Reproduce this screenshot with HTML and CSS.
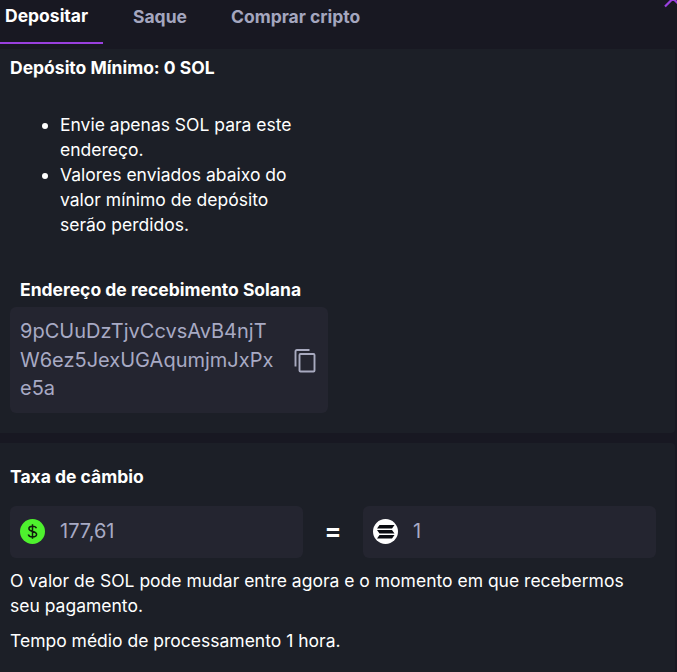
FILE: index.html
```html
<!DOCTYPE html>
<html lang="pt-BR">
<head>
<meta charset="utf-8">
<title>Depositar</title>
<link rel="stylesheet" href="styles.css">
</head>
<body>
<nav class="tabs">
  <span class="tab active">Depositar</span>
  <span class="tab saque">Saque</span>
  <span class="tab comprar">Comprar cripto</span>
</nav>
<svg class="chevron" width="13" height="8" viewBox="0 0 13 8"><path d="M1 6.500L9 -1.500L17 6.500" fill="none" stroke="#9a40df" stroke-width="2.200"/></svg>
<section class="panel deposit">
  <h2 class="minimum">Depósito Mínimo: 0 SOL</h2>
  <ul class="notes">
    <li>Envie apenas SOL para este<br>endereço.</li>
    <li>Valores enviados abaixo do<br>valor mínimo de depósito<br>serão perdidos.</li>
  </ul>
  <h3 class="label">Endereço de recebimento Solana</h3>
  <div class="address">
    <span class="hash">9pCUuDzTjvCcvsAvB4njT<br>W6ez5JexUGAqumjmJxPx<br>e5a</span>
    <svg class="copy" width="22" height="24" viewBox="0 0 22 24" fill="none" stroke="#a8aabf" stroke-width="1.900" stroke-linejoin="round"><path d="M1.500 17.500V2.500Q1.500 1 3 1H15.500"/><rect x="5.500" y="5" width="15" height="17.500" rx="1"/></svg>
  </div>
</section>
<section class="panel rate">
  <h2 class="rate-title">Taxa de câmbio</h2>
  <div class="exchange">
    <div class="field">
      <svg width="26" height="26" viewBox="0 0 26 26"><circle cx="12.500" cy="12.500" r="12.500" fill="#4ef12e"/><path d="M16.400 9.300C16 8 14.500 7.300 12.500 7.300C10.300 7.300 8.900 8.300 8.900 9.800C8.900 13.500 16.600 11.300 16.600 15.300C16.600 16.900 15 17.900 12.500 17.900C10.300 17.900 8.700 17 8.300 15.500M12.500 5.300V19.700" fill="none" stroke="#10200d" stroke-width="1.500"/></svg>
      <span>177,61</span>
    </div>
    <span class="equals">=</span>
    <div class="field">
      <svg width="26" height="26" viewBox="0 0 26 26"><circle cx="12.500" cy="12.500" r="12.500" fill="#fff"/><path d="M6.500 6H21.500L19 9.600H4ZM4 11H19L21.500 14.400H6.500ZM6.500 15.900H21.500L19 19.400H4Z" fill="#090b10"/></svg>
      <span>1</span>
    </div>
  </div>
  <p>O valor de SOL pode mudar entre agora e o momento em que recebermos<br>seu pagamento.</p>
  <p class="time">Tempo médio de processamento 1 hora.</p>
</section>
</body>
</html>
```
FILE: styles.css
```css
* { box-sizing: border-box; }
body {
  margin: 0;
  height: 672px;
  overflow: hidden;
  background: #181822;
  color: #fff;
  font: 17.5px/25px Inter, sans-serif;
}
h2, h3, p, ul { margin: 0; }
h2, h3 { font-size: 17.5px; font-weight: 650; line-height: 25px; }
.tabs { display: flex; height: 49px; }
.tab {
  height: 44px;
  padding-top: 4px;
  color: #a4a6bf;
  font-weight: 650;
  white-space: nowrap;
}
.active {
  width: 103px;
  padding: 3px 0 0 5px;
  border-bottom: 2px solid #9a40df;
  color: #fff;
}
.saque { margin-left: 30px; width: 98px; }
.chevron { position: absolute; top: 0; right: 0; }
.panel { width: 675px; background: #1c1f27; }
.deposit { height: 384px; padding: 6px 10px 0; border-radius: 0 0 4px 0; }
.notes { margin-top: 32px; padding-left: 50px; }
.label { margin: 40px 0 0 10px; }
.address {
  display: flex;
  align-items: center;
  justify-content: space-between;
  width: 318px;
  height: 106px;
  margin-top: 5px;
  padding: 0 12px 0 10px;
  border-radius: 6px;
  background: #242530;
}
.copy { margin-top: 2px; }
.hash, .field { color: #a8aac4; font-size: 20px; line-height: 28.5px; }
.rate { height: 229px; margin-top: 10px; padding: 21px 10px 0; border-radius: 0 4px 0 0; }
.exchange { display: flex; margin: 17px 0 10px; }
.field {
  display: flex;
  align-items: center;
  gap: 14px;
  width: 293px;
  height: 52px;
  padding-left: 10px;
  border-radius: 6px;
  background: #242530;
}
.field span { padding-bottom: 2px; }
.equals { width: 60px; text-align: center; font-size: 25px; font-weight: 700; line-height: 50px; }
.rate p { white-space: nowrap; }
.rate .time { margin-top: 10px; }
```
